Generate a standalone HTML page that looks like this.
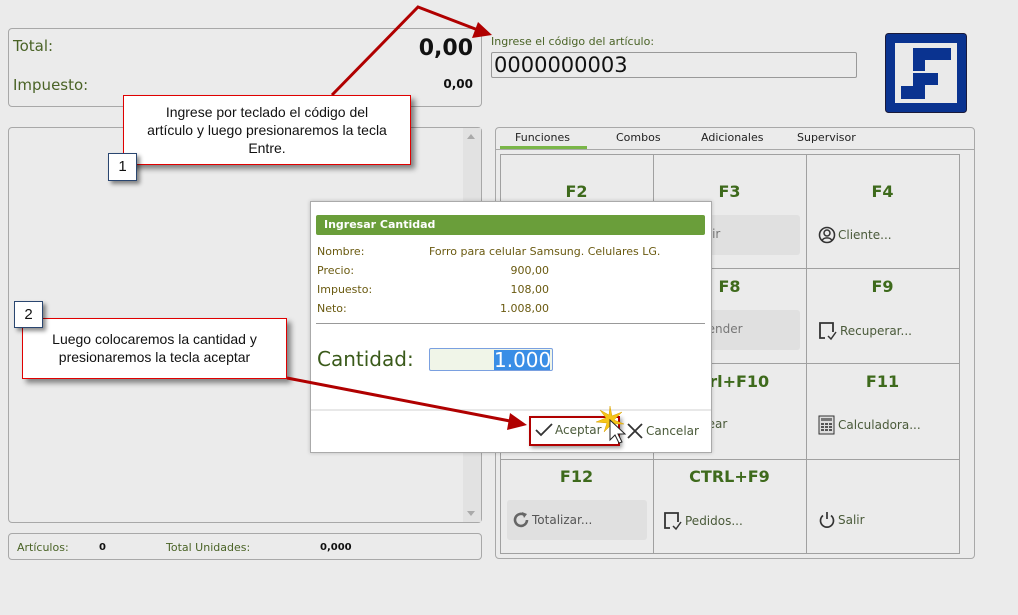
<!DOCTYPE html>
<html><head><meta charset="utf-8"><style>
*{box-sizing:border-box;margin:0;padding:0}
body{width:1018px;height:615px;background:#ebebeb;font-family:"DejaVu Sans",Verdana,sans-serif;position:relative;overflow:hidden}
.a{position:absolute}
.box{position:absolute;border:1px solid #a8a8a8;border-radius:4px}
.g{color:#4a6326}
.fk{position:absolute;width:153px;text-align:center;font-weight:bold;font-size:16px;color:#3e6a1c;font-family:"DejaVu Sans",sans-serif}
.bt{position:absolute;font-size:12px;color:#4a5a3a;display:flex;align-items:center;gap:2px}
.dl{position:absolute;font-size:11px;color:#6a5a10}
.call{position:absolute;background:#fff;border:1px solid #e00000;box-shadow:4px 4px 5px rgba(0,0,0,.45);font-family:"Liberation Sans",Arial,sans-serif;font-size:14px;text-align:center;line-height:18px;color:#111}
.num{position:absolute;background:#fff;border:1px solid #2a4670;box-shadow:3px 3px 4px rgba(0,0,0,.45);font-family:"Liberation Sans",Arial,sans-serif;font-size:15px;text-align:center;color:#111}
</style></head><body>

<div class="box" style="left:8px;top:28px;width:474px;height:79px"></div>
<div class="a g" style="left:13px;top:37px;font-size:15px">Total:</div>
<div class="a" style="right:545px;top:36px;font-size:22px;font-weight:bold;color:#111">0,00</div>
<div class="a g" style="left:13px;top:76px;font-size:15px">Impuesto:</div>
<div class="a" style="right:545px;top:77px;font-size:12px;font-weight:bold;color:#111">0,00</div>

<div class="box" style="left:8px;top:127px;width:474px;height:396px"></div>
<div class="a" style="left:463px;top:128px;width:18px;height:394px;background:#e2e2e2"></div>
<div class="a" style="left:467px;top:134px;border:4px solid transparent;border-bottom:5px solid #aaa;border-top:0"></div>
<div class="a" style="left:467px;top:511px;border:4px solid transparent;border-top:5px solid #aaa;border-bottom:0"></div>

<div class="box" style="left:8px;top:533px;width:474px;height:27px"></div>
<div class="a g" style="left:17px;top:541px;font-size:11px">Artículos:</div>
<div class="a" style="left:99px;top:542px;font-size:10px;font-weight:bold;color:#111">0</div>
<div class="a g" style="left:166px;top:541px;font-size:11px">Total Unidades:</div>
<div class="a" style="left:320px;top:542px;font-size:10px;font-weight:bold;color:#111">0,000</div>

<div class="a g" style="left:491px;top:35px;font-size:11px">Ingrese el código del artículo:</div>
<div class="a" style="left:491px;top:52px;width:366px;height:26px;border:1px solid #999;border-radius:2px;font-size:21px;color:#111;padding-left:2px;line-height:25px">0000000003</div>

<svg class="a" style="left:885px;top:33px" width="82" height="80">
<rect x="0.5" y="0.5" width="81" height="79" rx="3" fill="#0a3390" stroke="#1a1a3a"/>
<rect x="10" y="10" width="62" height="60" fill="#eaeaea"/>
<rect x="28" y="15" width="38" height="12" fill="#0a3390"/>
<rect x="28" y="27" width="12" height="11" fill="#0a3390"/>
<rect x="28" y="40" width="25" height="12" fill="#0a3390"/>
<rect x="28" y="52" width="12" height="2" fill="#0a3390"/>
<rect x="16" y="53" width="24" height="13" fill="#0a3390"/>
</svg>

<div class="box" style="left:495px;top:127px;width:480px;height:432px"></div>
<div class="a" style="left:496px;top:149px;width:478px;height:1px;background:#a8a8a8"></div>
<div class="a" style="left:515px;top:131px;font-size:11px;color:#222">Funciones</div>
<div class="a" style="left:616px;top:131px;font-size:11px;color:#222">Combos</div>
<div class="a" style="left:701px;top:131px;font-size:11px;color:#222">Adicionales</div>
<div class="a" style="left:797px;top:131px;font-size:11px;color:#222">Supervisor</div>
<div class="a" style="left:500px;top:146px;width:87px;height:3px;background:#7ab648"></div>

<div class="a" style="left:500px;top:154px;width:460px;height:400px;border:1px solid #a0a0a0"></div>
<div class="a" style="left:653px;top:154px;width:1px;height:400px;background:#a0a0a0"></div>
<div class="a" style="left:806px;top:154px;width:1px;height:400px;background:#a0a0a0"></div>
<div class="a" style="left:500px;top:268px;width:460px;height:1px;background:#a0a0a0"></div>
<div class="a" style="left:500px;top:363px;width:460px;height:1px;background:#a0a0a0"></div>
<div class="a" style="left:500px;top:459px;width:460px;height:1px;background:#a0a0a0"></div>

<div class="fk" style="left:500px;top:182px">F2</div>
<div class="fk" style="left:653px;top:182px">F3</div>
<div class="fk" style="left:806px;top:182px">F4</div>
<div class="fk" style="left:653px;top:277px">F8</div>
<div class="fk" style="left:806px;top:277px">F9</div>
<div class="fk" style="left:653px;top:372px">Ctrl+F10</div>
<div class="fk" style="left:806px;top:372px">F11</div>
<div class="fk" style="left:500px;top:467px">F12</div>
<div class="fk" style="left:653px;top:467px">CTRL+F9</div>

<div class="a" style="left:660px;top:215px;width:140px;height:40px;background:#e0e0e0;border-radius:3px"></div>
<div class="a" style="left:660px;top:310px;width:140px;height:40px;background:#e0e0e0;border-radius:3px"></div>
<div class="a" style="left:507px;top:500px;width:140px;height:40px;background:#e0e0e0;border-radius:3px"></div>
<div class="bt" style="left:700px;top:227px;color:#777">etir</div>
<div class="bt" style="left:700px;top:322px;color:#777">pender</div>
<div class="bt" style="left:700px;top:417px">uear</div>

<div class="bt" style="left:818px;top:226px"><svg width="18" height="18"><circle cx="9" cy="9" r="7.5" fill="none" stroke="#333" stroke-width="1.6"/><circle cx="9" cy="7" r="3" fill="none" stroke="#333" stroke-width="1.5"/><path d="M4 14.5c2-3.5 8-3.5 10 0" fill="none" stroke="#333" stroke-width="1.5"/></svg>Cliente...</div>
<div class="bt" style="left:818px;top:320px"><svg width="20" height="22"><path d="M7 18H2V3h13v9" fill="none" stroke="#333" stroke-width="1.8"/><path d="M10 16l3 3 5-7" fill="none" stroke="#333" stroke-width="1.5"/></svg>Recuperar...</div>
<div class="bt" style="left:818px;top:415px"><svg width="18" height="20"><rect x="1" y="1" width="15" height="18" fill="#ddd" stroke="#333"/><rect x="3" y="3" width="11" height="3" fill="#777"/><path d="M3 8h3v2H3zM7 8h3v2H7zM11 8h3v2h-3zM3 11h3v2H3zM7 11h3v2H7zM11 11h3v2h-3zM3 14h3v2H3zM7 14h3v2H7zM11 14h3v2h-3z" fill="#555"/></svg>Calculadora...</div>
<div class="bt" style="left:512px;top:511px;color:#555"><svg width="18" height="18"><path d="M15 9A6 6 0 1 1 12.5 4" fill="none" stroke="#666" stroke-width="2.6"/><path d="M10 1l5 2-3 4z" fill="#666"/></svg>Totalizar...</div>
<div class="bt" style="left:663px;top:510px"><svg width="20" height="22"><path d="M7 18H2V3h13v9" fill="none" stroke="#333" stroke-width="1.8"/><path d="M10 16l3 3 5-7" fill="none" stroke="#333" stroke-width="1.5"/></svg>Pedidos...</div>
<div class="bt" style="left:818px;top:511px"><svg width="18" height="18"><path d="M5 4.5A6.5 6.5 0 1 0 13 4.5" fill="none" stroke="#333" stroke-width="1.7"/><path d="M9 1v7" stroke="#333" stroke-width="1.7"/></svg>Salir</div>

<div class="a" style="left:310px;top:201px;width:402px;height:252px;background:#fff;border:1px solid #aaa;box-shadow:0 0 4px rgba(0,0,0,.2)"></div>
<div class="a" style="left:316px;top:215px;width:389px;height:20px;background:#6a9e3a;border-radius:2px;color:#fff;font-weight:bold;font-size:11px;padding-left:8px;line-height:20px">Ingresar Cantidad</div>
<div class="dl" style="left:317px;top:245px">Nombre:</div>
<div class="dl" style="left:429px;top:245px">Forro para celular Samsung. Celulares LG.</div>
<div class="dl" style="left:317px;top:264px">Precio:</div>
<div class="dl" style="right:469px;top:264px">900,00</div>
<div class="dl" style="left:317px;top:283px">Impuesto:</div>
<div class="dl" style="right:469px;top:283px">108,00</div>
<div class="dl" style="left:317px;top:302px">Neto:</div>
<div class="dl" style="right:469px;top:302px">1.008,00</div>
<div class="a" style="left:316px;top:323px;width:389px;height:1px;background:#999"></div>
<div class="a g" style="left:317px;top:347px;font-size:20px;color:#3a5a1a">Cantidad:</div>
<div class="a" style="left:429px;top:348px;width:124px;height:23px;background:#f0f5e8;border:1px solid #7aa0e0;border-radius:2px"></div>
<div class="a" style="left:494px;top:350px;width:56px;height:20px;background:#3a8ee6;color:#fff;font-size:20px;line-height:20px;text-align:right">1.000</div>
<div class="a" style="left:311px;top:409px;width:400px;height:2px;background:#e8e8e8"></div>
<div class="a" style="left:529px;top:416px;width:91px;height:30px;border:2px solid #b00000;box-shadow:2px 2px 4px rgba(0,0,0,.4)"></div>
<div class="bt" style="left:535px;top:423px;font-size:12px;color:#4a5a3a"><svg width="18" height="14"><path d="M1 7l5 5L17 1" fill="none" stroke="#333" stroke-width="1.8"/></svg>Aceptar</div>
<div class="bt" style="left:626px;top:422px;font-size:12px;color:#4a5a3a"><svg width="18" height="18"><path d="M2 2l14 14M16 2L2 16" stroke="#333" stroke-width="1.8"/></svg>Cancelar</div>

<div class="call" style="left:123px;top:95px;width:288px;height:70px;padding-top:7px">Ingrese por teclado el código del<br>artículo y luego presionaremos la tecla<br>Entre.</div>
<div class="num" style="left:108px;top:153px;width:29px;height:28px;line-height:26px">1</div>
<div class="call" style="left:22px;top:318px;width:265px;height:61px;padding-top:11px">Luego colocaremos la cantidad y<br>presionaremos la tecla aceptar</div>
<div class="num" style="left:14px;top:301px;width:29px;height:27px;line-height:25px">2</div>

<svg class="a" style="left:0;top:0" width="1018" height="615">
<path d="M332 95L418 7L478 30" fill="none" stroke="#b00000" stroke-width="3"/>
<path d="M492 35L472 38L478 22z" fill="#b00000"/>
<path d="M287 378L510 421" fill="none" stroke="#b00000" stroke-width="3"/>
<path d="M527 425L507 430L510 413z" fill="#b00000"/>
<g transform="translate(610,420)">
<path d="M0-14L2-4 12-8 4 0 14 4 3 4 5 14 0 6-6 12-3 3-14 2-4-2-10-10-1-5z" fill="#f5c518" stroke="#d8a000" stroke-width=".5"/>
<path d="M0 0v20l5-5 4 8 3-1-4-8h7z" fill="#fff" stroke="#222" stroke-width="1"/>
</g>
</svg>
</body></html>
